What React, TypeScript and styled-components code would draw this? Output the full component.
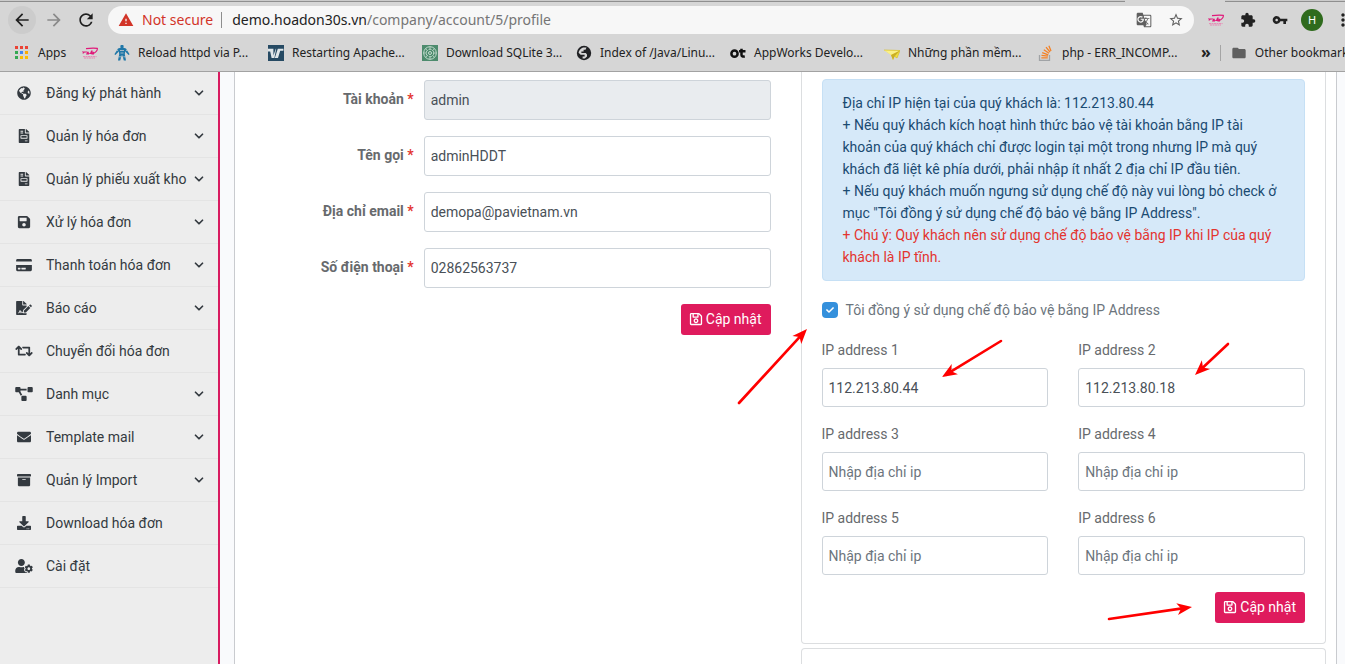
import React from 'react';
import styled, { createGlobalStyle } from 'styled-components';
import {
  FaGlobeAmericas, FaFileInvoice, FaSave, FaRegSave, FaCreditCard, FaFileSignature, FaRetweet,
  FaProjectDiagram, FaEnvelope, FaArchive, FaDownload, FaUserCog, FaCheck,
} from 'react-icons/fa';
import {
  MdArrowBack, MdArrowForward, MdRefresh, MdWarning, MdStarBorder, MdGTranslate,
  MdExtension, MdVpnKey, MdMoreVert, MdFolder,
} from 'react-icons/md';
import { FiChevronDown } from 'react-icons/fi';

const Global = createGlobalStyle`
  *, *::before, *::after { box-sizing: border-box; }
  body { margin: 0; background: #f9fafc; font-family: Roboto, "Liberation Sans", sans-serif; font-size: 14px; line-height: 22px; color: #676a6d; }
  button, input { font: inherit; }
`;

const Window = styled.div`
  position: relative;
  display: flex;
  flex-direction: column;
  height: 100vh;
  overflow: hidden;
`;

/* ---------- browser frame ---------- */
const Chrome = styled.header`
  flex: none;
  background: #d6d6d6;
  border-bottom: 1px solid #a2a2a2;
  color: #222;
  font-family: "Noto Sans", sans-serif;
`;
const TabEdge = styled.div`
  display: flex;
  height: 2px;
  gap: 100px;
`;
const TabLine = styled.div<{ $grow?: boolean }>`
  flex: ${p => (p.$grow ? '1 1 auto' : '0 0 120px')};
  background: #cbcbcb;
  border-bottom: 1px solid #8f8f8f;
`;
const Toolbar = styled.div`
  display: flex;
  align-items: center;
  height: 36px;
  padding-left: 8px;
`;
const RoundButton = styled.button<{ $shade?: boolean; $dim?: boolean }>`
  display: grid;
  place-items: center;
  flex: none;
  width: 28px;
  height: 28px;
  margin-right: 4px;
  padding: 0;
  border: 0;
  border-radius: 50%;
  background: ${p => (p.$shade ? '#cccccc' : 'transparent')};
  color: ${p => (p.$dim ? '#8a8a8a' : '#202020')};
  font-size: 20px;
`;
const AddressBar = styled.div`
  display: flex;
  align-items: center;
  flex: 1;
  height: 28px;
  margin: 0 6px 0 4px;
  padding: 0 2px 0 10px;
  border-radius: 14px;
  background: #f7f7f7;
  color: #5f5f5f;
`;
const Warning = styled.span`
  display: flex;
  align-items: center;
  gap: 8px;
  padding-right: 8px;
  border-right: 1px solid #8e8e8e;
  color: #d23428;
  line-height: 16px;
  white-space: nowrap;
  svg { font-size: 16px; }
`;
const Url = styled.span`
  flex: 1;
  padding-left: 10px;
  color: #757575;
  b { font-weight: 400; color: #222; }
`;
const BarIcon = styled.button`
  display: grid;
  place-items: center;
  width: 32px;
  height: 28px;
  flex: none;
  padding: 0;
  border: 0;
  background: none;
  color: ${p => p.color || '#5f5f5f'};
  font-size: 16px;
`;
const Avatar = styled.span`
  display: grid;
  place-items: center;
  flex: none;
  width: 22px;
  height: 22px;
  margin: 0 10px 0 5px;
  border-radius: 50%;
  background: #2f6b1d;
  color: #fff;
  font-size: 11px;
`;
const Clipped = styled.div`
  width: 12px;
  height: 20px;
  overflow: hidden;
  flex: none;
  svg { font-size: 20px; }
`;
const Bookmarks = styled.nav`
  display: flex;
  align-items: center;
  height: 33px;
  padding: 0 0 4px 14px;
  font-size: 12px;
  line-height: 20px;
  white-space: nowrap;
  overflow: hidden;
`;
const Bookmark = styled.a<{ $w: number }>`
  display: flex;
  align-items: center;
  gap: 8px;
  flex: 0 0 ${p => p.$w}px;
  color: #222;
  text-decoration: none;
  svg { flex: none; width: 16px; height: 16px; }
`;
const More = styled.button`
  padding: 0;
  border: 0;
  background: none;
  color: #222;
  font-size: 16px;
  line-height: 16px;
  font-weight: 700;
  padding-bottom: 2px;
`;
const Divider = styled.span`
  flex: none;
  width: 1px;
  height: 16px;
  margin: 0 10px 0 9px;
  background: #a5a5a5;
`;

/* ---------- page ---------- */
const Page = styled.div`
  display: flex;
  flex: 1;
  min-height: 0;
`;
const Sidebar = styled.nav`
  flex: 0 0 220px;
  background: #ededed;
  border-right: 2px solid #d81b60;
`;
const MenuItem = styled.a<{ $icon: number }>`
  display: grid;
  grid-template-columns: 18px 1fr 14px;
  column-gap: 13px;
  align-items: center;
  height: 43px;
  padding: 0 12px 0 15px;
  border-bottom: 1px solid #e4e4e4;
  color: #343a40;
  text-decoration: none;
  white-space: nowrap;
  svg { justify-self: center; width: 14px; height: 14px; }
  svg:first-child { width: ${p => p.$icon}px; }
  span { min-width: 0; }
`;
const Main = styled.main`
  display: grid;
  grid-template-columns: 1fr 1fr;
  gap: 30px;
  flex: 1;
  margin: 0 8px 0 14px;
  padding: 0 10px;
  background: #fff;
  border: solid #c9cbcf;
  border-width: 0 1px;
`;
const AccountForm = styled.form`
  display: flex;
  flex-direction: column;
  gap: 16px;
  padding-top: 8px;
`;
const Row = styled.div`
  display: grid;
  grid-template-columns: 34% 1fr;
`;
const RowLabel = styled.label`
  padding: 8px 10px 0 0;
  font-weight: 700;
  text-align: right;
  span { color: #e3342f; }
`;
const Field = styled.input<{ $compact?: boolean }>`
  width: 100%;
  height: ${p => (p.$compact ? 39 : 40)}px;
  padding: 0 6px;
  border: 1px solid #ced4da;
  border-radius: 3px;
  background: #fff;
  color: #495057;
  &:disabled { background: #e9ecef; }
  &::placeholder { color: #6c757d; opacity: 1; }
`;
const Submit = styled.button`
  display: flex;
  align-items: center;
  gap: 3px;
  align-self: flex-end;
  height: 31px;
  padding: 0 9px 2px 8px;
  border: 0;
  border-radius: 3px;
  background: #df1b5d;
  color: #fff;
`;
const Cards = styled.div`
  display: flex;
  flex-direction: column;
  gap: 4px;
`;
const Card = styled.form`
  flex: none;
  padding: 7px 20px 20px;
  border: 1px solid #dcdee0;
  border-top: 0;
  border-radius: 0 0 4px 4px;
`;
const NextCard = styled.section`
  flex: 1;
  border: 1px solid #dcdee0;
  border-bottom: 0;
  border-radius: 4px 4px 0 0;
`;
const Notice = styled.div`
  padding: 12px 20px;
  border: 1px solid #c6e0f5;
  border-radius: 4px;
  background: #d6e9f9;
  color: #1b4b72;
  p { margin: 0; }
  p:last-child { color: #e3342f; }
`;
const Agree = styled.label`
  display: flex;
  align-items: center;
  gap: 8px;
  margin: 18px 0;
  color: #6c757d;
`;
const Tick = styled.span`
  display: grid;
  width: 16px;
  height: 16px;
  input { grid-area: 1 / 1; appearance: none; width: 16px; height: 16px; margin: 0; border-radius: 4px; background: #3490dc; }
  svg { grid-area: 1 / 1; place-self: center; font-size: 8px; color: #fff; pointer-events: none; }
`;
const IpGrid = styled.div`
  display: grid;
  grid-template-columns: 1fr 1fr;
  gap: 16px 30px;
  margin-bottom: 17px;
`;
const IpField = styled.label`
  display: grid;
  gap: 7px;
`;
const Actions = styled.div`
  display: flex;
  justify-content: flex-end;
`;
const Annotations = styled.svg`
  position: absolute;
  top: 0;
  left: 0;
  width: 1345px;
  height: 664px;
  pointer-events: none;
`;

/* ---------- drawings ---------- */
const AppsIcon = () => (
  <svg viewBox="0 0 16 16">
    {['#ea4335', '#ea4335', '#ea4335', '#34a853', '#4285f4', '#fbab05', '#34a853', '#fbbc05', '#fbbc05'].map((c, i) => (
      <rect key={i} x={1 + (i % 3) * 5} y={1 + Math.floor(i / 3) * 5} width="3" height="3" fill={c} />
    ))}
  </svg>
);
const PaLogo = () => (
  <svg viewBox="0 0 16 16" width="16" height="16">
    <path d="M4 3.6Q11 2.8 15.4 3.4Q15.6 6 11.4 8.6" fill="none" stroke="#e0197a" strokeWidth="1.1" />
    <path d="M0 6.4H5.4L4.6 7.4H2.6L1.6 8.6H.4L1.2 7.2H0Z" fill="#e0197a" />
    <path d="M4 9.6L5.2 6.8H6.8V8.2H8L9.2 5.6H10.6V7.4L12 6.6V9.6H9.4V8.9H7V9.6Z" fill="#e0197a" />
    <path d="M1 11.6H14.6M2 13H13" stroke="#e97fb0" strokeWidth=".9" strokeDasharray="2 .5" />
  </svg>
);
const RobotIcon = () => (
  <svg viewBox="0 0 16 16" fill="#1f77a8">
    <rect x="6.4" y="0" width="3.2" height="3" rx="1" />
    <path d="M4 3.5L6.5 2.8H9.5L12 3.5L13.5 6L15.6 9.2L14.6 10L11.2 6.4L10.8 9L12 15.5H9.8L8.4 10.5H7.6L6.2 15.5H4L5.2 9L4.8 6.4L1.4 10L.4 9.2L2.5 6Z" />
    <path d="M6 5.5H10M6.5 8H9.5M4.5 11.8H7M9.3 11.8H11.8M3 5L4.2 6M13 5L11.8 6" stroke="#d6d6d6" strokeWidth=".7" />
  </svg>
);
const VIcon = () => (
  <svg viewBox="0 0 16 16">
    <rect width="16" height="16" fill="#264a63" />
    <path d="M0 3.8H5.4V10.4L7.8 3.8H8.2L6.4 13H3.6L2.2 6.4H0Z" fill="#dfe6ea" />
    <path d="M9.8 3.8H15.4V5.8H12.2L10 13H6.8Z" fill="#dfe6ea" />
  </svg>
);
const SqliteIcon = () => (
  <svg viewBox="0 0 16 16">
    <rect width="16" height="16" fill="#4d8b6d" />
    <g fill="none" stroke="#c4dccf" strokeWidth="1">
      <circle cx="8" cy="8" r="6.3" />
      <circle cx="8" cy="8" r="3.8" strokeDasharray="3 1" />
      <circle cx="8" cy="8" r="1.5" />
      <path d="M8 1.5V5M8 11V14.5M1.5 8H5M11 8H14.5M3.5 3.5L5.5 5.5M10.5 10.5L12.5 12.5M12.5 3.5L10.5 5.5M5.5 10.5L3.5 12.5" strokeWidth=".7" />
    </g>
  </svg>
);
const GlobeIcon = () => (
  <svg viewBox="0 0 16 16">
    <circle cx="8" cy="8" r="7.2" fill="#202124" />
    <path d="M7 2.6H10.5L9.5 4.8H7.6V6.6H5.4V8H9.8L11 9.6V11.4L8.8 13.6L6.6 13.4V11.4H8.6V9.8H4.6L2.6 7.8Q3 4.6 7 2.6Z" fill="#d6d6d6" />
  </svg>
);
const OtIcon = () => (
  <svg viewBox="0 0 16 16" fill="none" stroke="#111" strokeWidth="2.5">
    <circle cx="4.5" cy="8.7" r="3.1" />
    <path d="M11.5 3.8V10Q11.5 12 14.8 11.4M9 6.3H15.5" />
  </svg>
);
const PlaneIcon = () => (
  <svg viewBox="0 0 16 16">
    <path d="M0 5L16 5.5L13 13L10.5 11.5L9 15L7 10Z" fill="#f0df3e" />
    <path d="M0 5L16 5.5L7 10Z" fill="#faf08a" />
    <path d="M16 5.5L7 10L9 15L10.5 11.5Z" fill="#c9ae25" />
    <path d="M0 5L16 5.5L13 13L9.8 10.8" fill="none" stroke="#d6bd2b" strokeWidth=".7" />
  </svg>
);
const StackIcon = () => (
  <svg viewBox="0 0 16 16" fill="none">
    <path d="M1.5 10V15.3H11.5V10" stroke="#a0a3a6" strokeWidth="1.3" />
    <path d="M3.3 12.8H9.8M3.5 10.4L9.9 11.2M4.2 7.7L10.3 9.8M5.8 4.8L11 8.2M8 2.2L12 7M10.9 .8L13 6" stroke="#f48024" strokeWidth="1.3" />
  </svg>
);

type Item = { icon: React.ElementType; text: string; more?: boolean; w?: number };
const menu: Item[] = [
  { icon: FaGlobeAmericas, text: 'Đăng ký phát hành', more: true },
  { icon: FaFileInvoice, text: 'Quản lý hóa đơn', more: true },
  { icon: FaFileInvoice, text: 'Quản lý phiếu xuất kho', more: true },
  { icon: FaSave, text: 'Xử lý hóa đơn', more: true },
  { icon: FaCreditCard, text: 'Thanh toán hóa đơn', more: true, w: 16 },
  { icon: FaFileSignature, text: 'Báo cáo', more: true, w: 16 },
  { icon: FaRetweet, text: 'Chuyển đổi hóa đơn', w: 18 },
  { icon: FaProjectDiagram, text: 'Danh mục', more: true, w: 18 },
  { icon: FaEnvelope, text: 'Template mail', more: true },
  { icon: FaArchive, text: 'Quản lý Import', more: true },
  { icon: FaDownload, text: 'Download hóa đơn' },
  { icon: FaUserCog, text: 'Cài đặt', w: 18 },
];

const bookmarks: { icon: React.ElementType; text?: string; w: number }[] = [
  { icon: AppsIcon, text: 'Apps', w: 68 },
  { icon: PaLogo, w: 32 },
  { icon: RobotIcon, text: 'Reload httpd via P...', w: 154 },
  { icon: VIcon, text: 'Restarting Apache...', w: 154 },
  { icon: SqliteIcon, text: 'Download SQLite 3...', w: 154 },
  { icon: GlobeIcon, text: 'Index of /Java/Linu...', w: 154 },
  { icon: OtIcon, text: 'AppWorks Develo...', w: 154 },
  { icon: PlaneIcon, text: 'Những phần mềm...', w: 154 },
  { icon: StackIcon, text: 'php - ERR_INCOMP...', w: 163 },
];

const fields = [
  { id: 'account', label: 'Tài khoản', value: 'admin', disabled: true },
  { id: 'name', label: 'Tên gọi', value: 'adminHDDT' },
  { id: 'email', label: 'Địa chỉ email', value: 'demopa@pavietnam.vn' },
  { id: 'phone', label: 'Số điện thoại', value: '02862563737' },
];
const ips = ['112.213.80.44', '112.213.80.18', '', '', '', ''];

/* start and tip of each annotation arrow */
const arrows = [
  [739, 403, 807, 329],
  [1001, 341, 942, 377],
  [1228, 344, 1195, 375],
  [1109, 619, 1192, 607],
];

const Arrow = ({ p: [x1, y1, x2, y2] }: { p: number[] }) => {
  const angle = (Math.atan2(y2 - y1, x2 - x1) * 180) / Math.PI;
  const len = Math.hypot(x2 - x1, y2 - y1);
  return (
    <g transform={`translate(${x2} ${y2}) rotate(${angle})`}>
      <path d={`M${-len} 0H-8`} stroke="#f00" strokeWidth="2.6" strokeLinecap="round" />
      <path d="M0 0L-15 -6L-11 0L-15 6Z" fill="#f00" />
    </g>
  );
};

export default function App() {
  return (
    <Window>
      <Global />
      <Chrome>
        <TabEdge><TabLine $grow /><TabLine /></TabEdge>
        <Toolbar>
          <RoundButton $shade aria-label="Back"><MdArrowBack /></RoundButton>
          <RoundButton $dim aria-label="Forward"><MdArrowForward /></RoundButton>
          <RoundButton aria-label="Reload"><MdRefresh /></RoundButton>
          <AddressBar>
            <Warning><MdWarning />Not secure</Warning>
            <Url><b>demo.hoadon30s.vn</b>/company/account/5/profile</Url>
            <BarIcon aria-label="Translate"><MdGTranslate /></BarIcon>
            <BarIcon aria-label="Bookmark"><MdStarBorder /></BarIcon>
          </AddressBar>
          <BarIcon aria-label="PA extension"><PaLogo /></BarIcon>
          <BarIcon color="#222" aria-label="Extensions"><MdExtension /></BarIcon>
          <BarIcon color="#222" aria-label="Passwords"><MdVpnKey /></BarIcon>
          <Avatar>H</Avatar>
          <Clipped><MdMoreVert /></Clipped>
        </Toolbar>
        <Bookmarks>
          {bookmarks.map((b, i) => (
            <Bookmark key={i} href="#" $w={b.w}><b.icon />{b.text}</Bookmark>
          ))}
          <More aria-label="More bookmarks">»</More>
          <Divider />
          <Bookmark href="#" $w={130}><MdFolder color="#606060" />Other bookmarks</Bookmark>
        </Bookmarks>
      </Chrome>

      <Page>
        <Sidebar>
          {menu.map(m => (
            <MenuItem key={m.text} href="#" $icon={m.w ?? 14}>
              <m.icon preserveAspectRatio="xMidYMid meet" /><span>{m.text}</span>{m.more && <FiChevronDown strokeWidth={3} />}
            </MenuItem>
          ))}
        </Sidebar>
        <Main>
          <AccountForm>
            {fields.map(f => (
              <Row key={f.id}>
                <RowLabel htmlFor={f.id}>{f.label} <span>*</span></RowLabel>
                <Field id={f.id} defaultValue={f.value} disabled={f.disabled} />
              </Row>
            ))}
            <Submit type="button"><FaRegSave />Cập nhật</Submit>
          </AccountForm>
          <Cards>
            <Card>
              <Notice>
                <p>Địa chỉ IP hiện tại của quý khách là: 112.213.80.44</p>
                <p>+ Nếu quý khách kích hoạt hình thức bảo vệ tài khoản bằng IP tài khoản của quý khách chỉ được login tại một trong nhưng IP mà quý khách đã liệt kê phía dưới, phải nhập ít nhất 2 địa chỉ IP đầu tiên.</p>
                <p>+ Nếu quý khách muốn ngưng sử dụng chế độ này vui lòng bỏ check ở mục "Tôi đồng ý sử dụng chế độ bảo vệ bằng IP Address".</p>
                <p>+ Chú ý: Quý khách nên sử dụng chế độ bảo vệ bằng IP khi IP của quý khách là IP tĩnh.</p>
              </Notice>
              <Agree>
                <Tick><input type="checkbox" defaultChecked /><FaCheck /></Tick>
                Tôi đồng ý sử dụng chế độ bảo vệ bằng IP Address
              </Agree>
              <IpGrid>
                {ips.map((ip, i) => (
                  <IpField key={i}>
                    IP address {i + 1}
                    <Field $compact defaultValue={ip} placeholder="Nhập địa chỉ ip" />
                  </IpField>
                ))}
              </IpGrid>
              <Actions><Submit type="button"><FaRegSave />Cập nhật</Submit></Actions>
            </Card>
            <NextCard />
          </Cards>
        </Main>
      </Page>

      <Annotations aria-hidden="true">
        {arrows.map((p, i) => <Arrow key={i} p={p} />)}
      </Annotations>
    </Window>
  );
}
